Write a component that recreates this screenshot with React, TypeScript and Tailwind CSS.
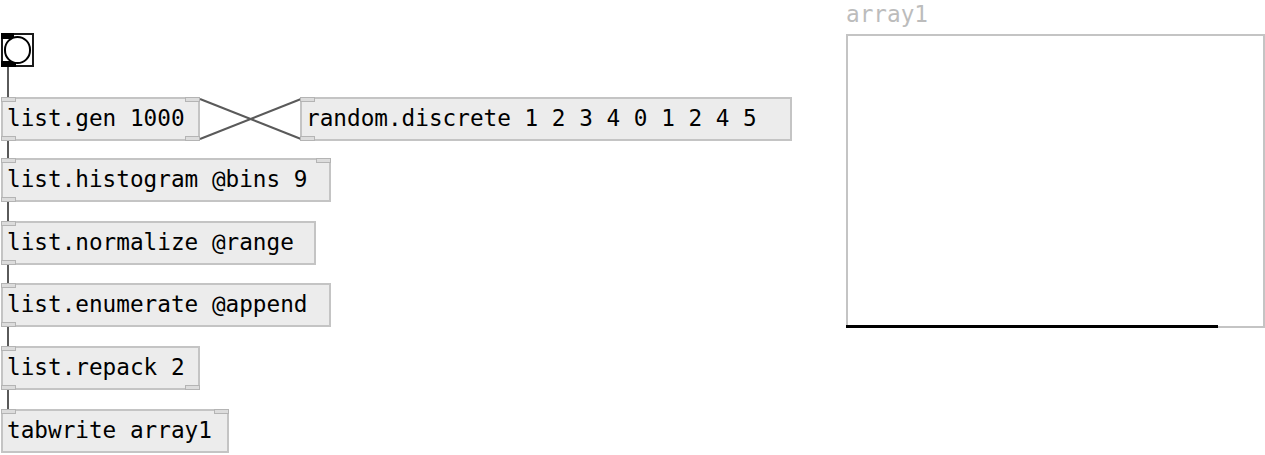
type Obj = {
  text: string;
  x: number;
  y: number;
  w: number;
  ins: number;
  outs: number;
};

const objects: Obj[] = [
  { text: 'list.gen 1000', x: 1, y: 97, w: 199, ins: 2, outs: 2 },
  { text: 'random.discrete 1 2 3 4 0 1 2 4 5', x: 300, y: 97, w: 492, ins: 1, outs: 1 },
  { text: 'list.histogram @bins 9', x: 1, y: 158, w: 330, ins: 2, outs: 1 },
  { text: 'list.normalize @range', x: 1, y: 221, w: 315, ins: 1, outs: 1 },
  { text: 'list.enumerate @append', x: 1, y: 283, w: 330, ins: 1, outs: 1 },
  { text: 'list.repack 2', x: 1, y: 346, w: 199, ins: 1, outs: 2 },
  { text: 'tabwrite array1', x: 1, y: 409, w: 228, ins: 2, outs: 0 },
];

const H = 44;
const mono = { fontFamily: '"DejaVu Sans Mono", "Liberation Mono", monospace' };

function Port({ side, top }: { side: 'left' | 'right'; top: boolean }) {
  return (
    <div
      className={`absolute w-[15px] h-[5px] bg-[#dcdcdc] border border-[#b4b4b4] ${
        side === 'left' ? 'left-[-2px]' : 'right-[-2px]'
      } ${top ? 'top-[-2px]' : 'bottom-[-2px]'}`}
    />
  );
}

function Box({ o }: { o: Obj }) {
  return (
    <div
      className="absolute bg-[#ececec] border-2 border-[#c4c4c4] flex items-center pl-[4px] text-[22.7px] text-black leading-none whitespace-nowrap"
      style={{ left: o.x, top: o.y, width: o.w, height: H, ...mono }}
    >
      <span className="-mt-[1px]">{o.text}</span>
      {o.ins >= 1 && <Port side="left" top />}
      {o.ins >= 2 && <Port side="right" top />}
      {o.outs >= 1 && <Port side="left" top={false} />}
      {o.outs >= 2 && <Port side="right" top={false} />}
    </div>
  );
}

function Bang() {
  return (
    <div className="absolute left-[1px] top-[33px] w-[33px] h-[34px] border-2 border-[#1a1a1a] bg-white">
      <div className="absolute left-[-2px] top-[-2px] w-[13px] h-[6px] bg-black" />
      <div className="absolute left-[-2px] bottom-[-2px] w-[15px] h-[6px] bg-black" />
      <div className="absolute left-[1px] top-[1px] w-[27px] h-[28px] rounded-full border-2 border-black bg-white" />
    </div>
  );
}

export default function App() {
  return (
    <div className="relative w-[1265px] h-[455px] bg-white overflow-hidden">
      <svg className="absolute inset-0" width={1265} height={455}>
        <g stroke="#5a5a5a" strokeWidth={2} fill="none">
          <line x1={8} y1={66} x2={8} y2={98} />
          <line x1={8} y1={140} x2={8} y2={159} />
          <line x1={8} y1={201} x2={8} y2={222} />
          <line x1={8} y1={264} x2={8} y2={284} />
          <line x1={8} y1={326} x2={8} y2={347} />
          <line x1={8} y1={389} x2={8} y2={410} />
          <line x1={200} y1={139} x2={301} y2={99} />
          <line x1={301} y1={139} x2={200} y2={99} />
        </g>
      </svg>
      <Bang />
      {objects.map((o) => (
        <Box key={o.text} o={o} />
      ))}
      <div
        className="absolute left-[846px] top-[0px] text-[22.7px] leading-[28px] text-[#bcbcbc]"
        style={mono}
      >
        array1
      </div>
      <div className="absolute left-[846px] top-[34px] w-[419px] h-[294px] border-2 border-[#c4c4c4] bg-white">
        <div className="absolute left-[-2px] bottom-[-2px] w-[372px] h-[3px] bg-black" />
      </div>
    </div>
  );
}
